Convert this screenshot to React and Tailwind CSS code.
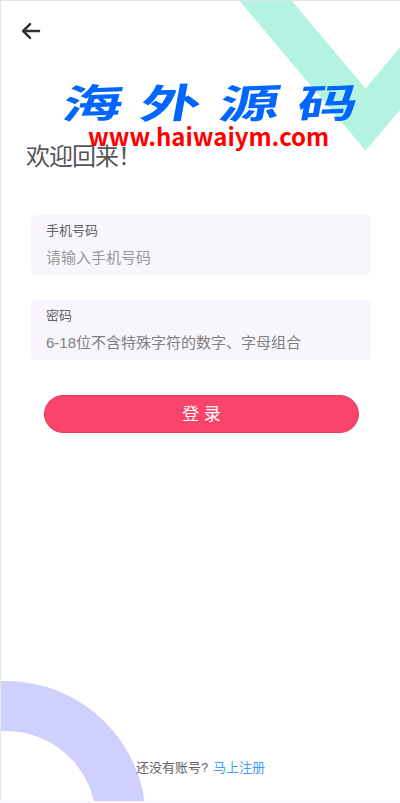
const fields = [
  { id: 'phone', label: '手机号码', type: 'tel', placeholder: '请输入手机号码', tone: 'placeholder:text-[#999]' },
  { id: 'password', label: '密码', type: 'password', placeholder: '6-18位不含特殊字符的数字、字母组合', tone: 'placeholder:text-[#808080]' }
];

function BackIcon() {
  return (
    <svg width="20" height="18" viewBox="0 0 20 18" fill="none" stroke="#303133" strokeWidth="2.5" strokeLinecap="round" strokeLinejoin="round">
      <path d="M9 2.2 L2.2 9 L9 15.8 M2.4 9 H18" />
    </svg>
  );
}

// Corner shapes sit behind the form
function Decorations() {
  return (
    <>
      <svg className="absolute top-0 right-0" width="160" height="152" viewBox="240 1 160 152">
        <path d="M239.5 1 H292 L365.5 88.5 L400 47.5 V110 L365.5 150.5 Z" fill="#b4f3e1" />
      </svg>
      <div className="absolute top-[680px] -left-[135px] size-[280px] rounded-full border-[50px] border-[#d0d0ff]" />
    </>
  );
}

function Brand() {
  return (
    <div className="pointer-events-none absolute top-[81px] left-[55px] w-[305px]">
      <div className="flex h-[44px] items-center justify-between text-[40px] leading-none font-bold text-[#0066ff]">
        {['海', '外', '源', '码'].map((char) => (
          <span key={char} className="relative left-[2px] flex w-[70px] origin-center -skew-x-[7deg] -skew-y-[3deg] scale-x-[1.5] justify-center">
            {char}
          </span>
        ))}
      </div>
      <p className="absolute top-[36px] left-[32px] text-[24px] leading-[36px] font-bold whitespace-nowrap text-[#ff0000] [font-family:'Noto_Sans_CJK_SC',sans-serif]">
        www.haiwaiym.com
      </p>
    </div>
  );
}

export default function App() {
  return (
    <div className="h-[803px] w-[400px] overflow-hidden bg-[#f8f8fe] [font-family:'Liberation_Sans','Noto_Sans_CJK_SC',sans-serif]">
      <div className="relative flex h-[801px] flex-col overflow-hidden border-t border-l border-[#e4e4e4] bg-white">
        <Decorations />

        <header className="relative flex h-[60px] shrink-0 items-center pl-5">
          <button aria-label="返回">
            <BackIcon />
          </button>
        </header>

        <h1 className="relative mt-[78px] ml-[25px] h-[36px] text-[24px] leading-[36px] tracking-[-1px] text-[#555]">
          欢迎回来！
        </h1>

        <form className="relative mt-[40px] flex flex-col pr-[29px] pl-[30px]">
          {fields.map((field) => (
            <div key={field.id} className="mb-[25px] flex h-[60px] flex-col rounded-[5px] bg-[#f8f5fc] px-[15px] pt-[6px]">
              <label htmlFor={field.id} className="h-[20px] text-[13px] leading-[20px] text-[#606266]">
                {field.label}
              </label>
              <input
                id={field.id}
                type={field.type}
                placeholder={field.placeholder}
                className={`mt-[5px] h-[24px] w-full bg-transparent text-[15px] leading-[24px] outline-none ${field.tone}`}
              />
            </div>
          ))}
          <button
            type="button"
            className="mt-[10px] mr-[12px] ml-[13px] h-[38px] rounded-full border border-[#e43e62] bg-[#fb446b] pt-px text-[17px] text-white"
          >
            登 录
          </button>
        </form>

        <footer className="relative mt-auto mb-[23px] flex h-[20px] justify-center gap-[5px] text-[13px] leading-[20px] text-[#606266]">
          <span>还没有账号?</span>
          <a className="text-[#409eff]">马上注册</a>
        </footer>

        <Brand />
      </div>
    </div>
  );
}
